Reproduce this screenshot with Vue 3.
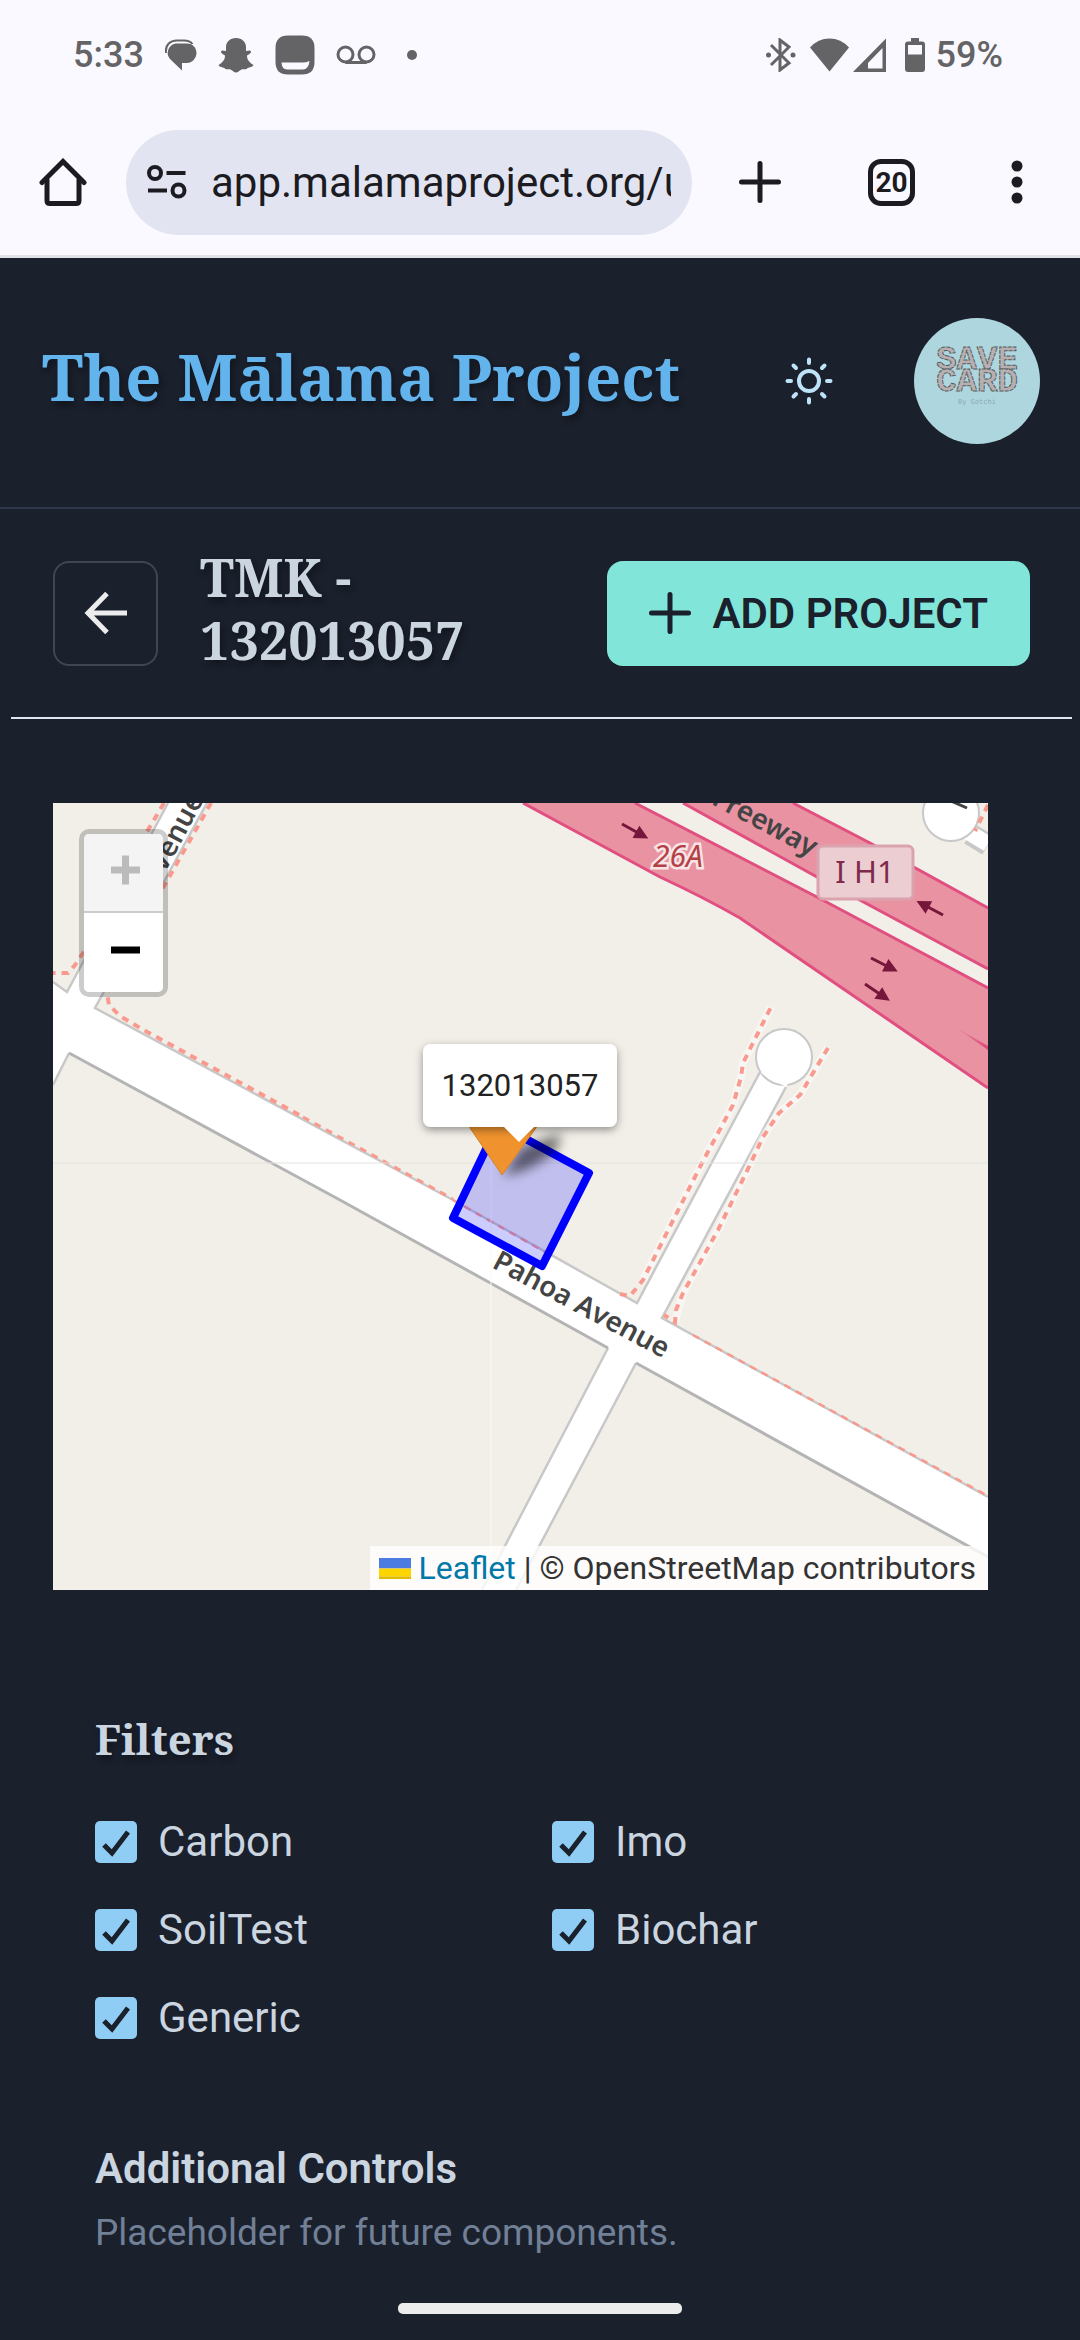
<script setup>
import { ref } from 'vue'

const address = ref('app.malamaproject.org/user')
const parcel = '132013057'
const filters = ref([
  { id: 'carbon', label: 'Carbon', on: true },
  { id: 'imo', label: 'Imo', on: true },
  { id: 'soiltest', label: 'SoilTest', on: true },
  { id: 'biochar', label: 'Biochar', on: true },
  { id: 'generic', label: 'Generic', on: true },
])
</script>

<template>
  <div class="screen">
    <div class="status">
      <div class="status-left">
        <span class="clock">5:33</span>
        <svg width="32" height="32" viewBox="0 0 32 32">
          <path d="M1 14C0 6 5 1.500 12 1.500H19C23 1.500 26 3 27.500 5" fill="none" stroke="#646466" stroke-width="2" />
          <path d="M12 4.500H22C28 4.500 31.500 9 31.500 14S27 24 22 24H17V31.500L6 21C3 18 2 15 3 12C4 7 8 4.500 12 4.500Z" fill="#646466" />
        </svg>
        <svg width="36" height="36" viewBox="0 0 36 36">
          <path d="M18 1C24 1 28 5 28 10V14L32 13.500C34 14.500 33 16.500 29 18.500C29 23 31 25 35.500 28C34 30.500 32 30 29.500 31C28 33.500 26 31.500 23.500 32.500C21 34 20 35.500 18 35.500S15 34 12.500 32.500C10 31.500 8 33.500 6.500 31C4 30 2 30.500 .5 28C5 25 7 23 7 18.500C3 16.500 2 14.500 4 13.500L8 14V10C8 5 12 1 18 1Z" fill="#646466" />
        </svg>
        <svg width="40" height="40" viewBox="0 0 40 40">
          <path fill-rule="evenodd" d="M13 .5H27Q39.500 .5 39.500 13V27Q39.500 39.500 27 39.500H13Q.5 39.500 .5 27V13Q.5 .5 13 .5ZM6.500 27.500Q7 34.500 12 34.500H28Q33.500 34.500 34.500 26Q31 27.500 28 27.500Z" fill="#646466" />
        </svg>
        <svg width="40" height="20" viewBox="0 0 40 20" fill="none" stroke="#646466" stroke-width="3">
          <circle cx="9.500" cy="9.500" r="7.500" /><circle cx="30.500" cy="9.500" r="7.500" /><path d="M9.500 17.500H30.500" />
        </svg>
        <span class="dot"></span>
      </div>
      <div class="status-right">
        <svg width="30" height="34" viewBox="0 0 30 34">
          <path d="M5 7L23 25L14 32V2L23 9L5 27" fill="none" stroke="#646466" stroke-width="3" />
          <circle cx="2.500" cy="17" r="2.500" fill="#646466" /><circle cx="27" cy="17" r="2.500" fill="#646466" />
        </svg>
        <svg class="wifi" width="76" height="34" viewBox="0 0 76 34">
          <path d="M0 9.500Q8 .5 19.500 .5T39 9.500L19.500 33.500Z" fill="#646466" />
          <path fill-rule="evenodd" d="M76 .5V34H43ZM72.500 10L58 25V30.500H72.500Z" fill="#646466" />
        </svg>
        <svg class="battery" width="22" height="34" viewBox="0 0 22 34">
          <path fill-rule="evenodd" d="M7 0H15V3.500H18Q21 3.500 21 6.500V31Q21 34 18 34H4Q1 34 1 31V6.500Q1 3.500 4 3.500H7ZM4 7V16.500H18V7Z" fill="#646466" />
        </svg>
        <span class="clock">59%</span>
      </div>
    </div>

    <div class="toolbar">
      <button class="bare" aria-label="Home">
        <svg width="48" height="48" viewBox="0 0 48 48" fill="none" stroke="#1b1b21" stroke-width="5">
          <path d="M8 21V42.500Q8 45.500 11 45.500H37Q40 45.500 40 42.500V21" />
          <path d="M3 24.500L24 3.500L45 24.500" stroke-linecap="round" />
        </svg>
      </button>
      <div class="pill">
        <svg width="40" height="34" viewBox="0 0 40 34" fill="none" stroke="#1b1b21" stroke-width="4">
          <circle cx="8" cy="8" r="6" /><circle cx="31.500" cy="25.500" r="6" /><path d="M19.500 8H38.500M1 25.500H20" />
        </svg>
        <input v-model="address" class="url" type="text" aria-label="Address" />
      </div>
      <button class="bare" aria-label="New tab">
        <svg width="42" height="42" viewBox="0 0 42 42" fill="none" stroke="#1b1b21" stroke-width="5" stroke-linecap="round">
          <path d="M21 2.500V39.500M2.500 21H39.500" />
        </svg>
      </button>
      <button class="tabs" aria-label="Open tabs">20</button>
      <button class="bare" aria-label="Menu">
        <svg width="12" height="44" viewBox="0 0 12 44" fill="#1b1b21">
          <circle cx="6" cy="6" r="5.500" /><circle cx="6" cy="22" r="5.500" /><circle cx="6" cy="38" r="5.500" />
        </svg>
      </button>
    </div>

    <header class="site">
      <h1>The Mālama Project</h1>
      <button class="bare" aria-label="Toggle theme">
        <svg width="48" height="48" viewBox="0 0 48 48" fill="none" stroke="#bee3f8" stroke-width="4" stroke-linecap="round">
          <circle cx="24" cy="24" r="10" />
          <path d="M24 2.500V6M24 42V45.500M2.500 24H6M42 24H45.500M8.500 8.500L11 11M37 37L39.500 39.500M8.500 39.500L11 37M37 11L39.500 8.500" />
        </svg>
      </button>
      <button class="bare avatar" aria-label="Account">
        <svg width="126" height="126" viewBox="0 0 126 126">
          <circle cx="63" cy="63" r="63" fill="#aed6df" />
          <g class="pixel" text-anchor="middle">
            <text x="63" y="51">SAVE</text>
            <text x="63" y="73">CARD</text>
          </g>
          <text class="by" x="63" y="86" text-anchor="middle">By Gotchi</text>
        </svg>
      </button>
    </header>

    <main>
      <div class="titlebar">
        <button class="back" aria-label="Back">
          <svg width="44" height="44" viewBox="0 0 44 44" fill="none" stroke="#ececec" stroke-width="5">
            <path d="M43 22H5M23 2.500L4 22L23 41.500" />
          </svg>
        </button>
        <h2>TMK - {{ parcel }}</h2>
        <button class="add">
          <svg width="42" height="42" viewBox="0 0 42 42" fill="none" stroke="#1a202c" stroke-width="5" stroke-linecap="round">
            <path d="M21 2.500V39.500M2.500 21H39.500" />
          </svg>
          ADD PROJECT
        </button>
      </div>

      <section class="map" aria-label="Parcel map">
        <svg class="canvas" viewBox="0 0 935 787">
          <defs>
            <filter id="soft" x="-50%" y="-50%" width="200%" height="200%"><feGaussianBlur stdDeviation="6" /></filter>
            <filter id="drop" x="-10%" y="-20%" width="120%" height="150%"><feDropShadow dx="0" dy="3" stdDeviation="4" flood-opacity="0.4" /></filter>
            <linearGradient id="lane" x1="0" x2="1"><stop offset="0" stop-color="#dc4878" stop-opacity="0" /><stop offset="1" stop-color="#dc4878" /></linearGradient>
            <path id="arrow" d="M0 -1.500H16V-7L30 0L16 7V1.500H0Z" />
          </defs>
          <rect width="935" height="787" fill="#f2efe9" />

          <!-- local streets -->
          <path d="M115 0L14 189L0 179V282L16 250L287 397L555 545L429 787H463L583 560L935 754V694L609 515L733 284L707 269L584 500L400 397L42 205L154 0Z" fill="#fff" />
          <circle cx="731" cy="254" r="28" fill="#fff" stroke="#c8c8c8" stroke-width="2" />
          <path d="M708 270L720 250L745 264L733 284Z" fill="#fff" />
          <g fill="none" stroke="#c8c8c8" stroke-width="2.500">
            <path d="M115 0L14 189L0 179M154 0L42 205L400 397L584 500L707 269M733 284L609 515L935 694" />
            <path d="M0 282L16 250M555 545L429 787M463 787L583 560" />
            <path d="M16 250L287 397L555 545M583 560L935 754" stroke="#b4b4b4" stroke-width="3" />
          </g>
          <path d="M917 31L935 42" stroke="#c8c8c8" stroke-width="22" />
          <path d="M915 29L935 41" stroke="#fff" stroke-width="16" />
          <circle cx="898" cy="10" r="28" fill="#fff" stroke="#c8c8c8" stroke-width="2" />
          <path d="M898 -2L914 5" stroke="#444" stroke-width="3" />

          <!-- footpaths -->
          <g fill="none" stroke="#fff" stroke-opacity="0.45" stroke-width="8">
            <path d="M590 477L649 360L680 302L688 274L690 260L705 230L718 204M775 245L760 270L747 292L726 310L710 334L693 370L665 427L630 490L622 519" />
          </g>
          <g fill="none" stroke="#fa9a8e" stroke-width="4" stroke-dasharray="7 6">
            <path d="M111 0L92 32L30 150L22 162L15 170H0" />
            <path d="M158 0L110 85L54 190L56 202L67 213L87 225L250 314" />
            <path d="M567 491L577 493L590 477L649 360L680 302L688 274L690 260L705 230L718 204" />
            <path d="M775 245L760 270L747 292L726 310L710 334L693 370L665 427L630 490L623 507L622 519L611 512" />
            <path d="M250 314L400 396" stroke-width="3" />
            <path d="M400 397L492 449M640 532L935 693" stroke-width="2.500" />
            <path d="M935 2L922 28" />
          </g>

          <!-- freeway -->
          <g fill="#e892a2">
            <path d="M470 0L607 74Q650 94 687 115L935 285V185L764 94L582 0Z" />
            <path d="M630 0L764 74L935 166V105L817 40L740 0Z" />
          </g>
          <g fill="none" stroke="#e14f81" stroke-width="3">
            <path d="M470 0L607 74Q650 94 687 115L935 285M582 0L764 94L935 185M630 0L764 74L935 166M740 0L817 40L935 105" />
          </g>
          <path d="M902 224L935 243V247Z" fill="url(#lane)" />
          <g fill="#76163a">
            <use href="#arrow" transform="translate(569 21) rotate(29)" />
            <use href="#arrow" transform="translate(890 112) rotate(208)" />
            <use href="#arrow" transform="translate(818 155) rotate(27)" />
            <use href="#arrow" transform="translate(812 181) rotate(34)" />
          </g>
          <text class="road" x="758" y="54" text-anchor="end" transform="rotate(28 758 54)">Freeway</text>
          <text class="exit" x="600" y="64">26A</text>
          <rect x="765" y="43" width="95" height="53" rx="5" fill="#eccdd2" stroke="#dba3ae" stroke-width="3" />
          <text class="shield" x="812" y="80" text-anchor="middle">I H1</text>

          <text class="road" x="112" y="70" transform="rotate(-62 112 70)">venue</text>
          <text class="road" x="438" y="464" transform="rotate(28 438 464)">Pahoa Avenue</text>
          <path d="M0 360H935" stroke="#e4e2df" />
          <path d="M438 340V787" stroke="#fbfaf8" stroke-width="1" />

          <!-- selected parcel -->
          <path d="M400 415L489 463L536 370L445 321Z" fill="#00f" fill-opacity="0.2" stroke="#00f" stroke-width="8" stroke-linejoin="round" />
          <path d="M450 373L468 345L508 330L504 346Q480 368 450 373Z" fill="#000" fill-opacity="0.55" filter="url(#soft)" />
          <path d="M449 372L417 325Q408 300 430 285H470Q492 300 483 325Z" fill="#f0932e" stroke="#d5832c" stroke-width="1" />
          <g filter="url(#drop)">
            <rect x="370" y="241" width="194" height="83" rx="8" fill="#fff" />
          </g>
          <path d="M451 324H481L466 339Z" fill="#fff" />
          <text class="tip" x="467" y="293" text-anchor="middle">{{ parcel }}</text>
        </svg>

        <div class="zoom">
          <button aria-label="Zoom in" disabled>
            <svg width="30" height="30" viewBox="0 0 30 30"><path d="M0 15H29M14.500 .5V29.500" stroke="#bbb" stroke-width="7" /></svg>
          </button>
          <button aria-label="Zoom out">
            <svg width="30" height="30" viewBox="0 0 30 30"><path d="M0 15H29" stroke="#000" stroke-width="7" /></svg>
          </button>
        </div>

        <div class="credit">
          <a href="#leaflet"><svg width="32" height="21" viewBox="0 0 12 8" preserveAspectRatio="none"><path fill="#4c7be1" d="M0 0h12v4H0z" /><path fill="#ffd500" d="M0 4h12v3H0z" /><path fill="#e0bc00" d="M0 7h12v1H0z" /></svg> Leaflet</a>
          | © OpenStreetMap contributors
        </div>
      </section>

      <section class="panel">
        <h3>Filters</h3>
        <div class="filters">
          <label v-for="f in filters" :key="f.id" :for="f.id">
            <input :id="f.id" v-model="f.on" type="checkbox" />
            <svg class="tick" width="42" height="42" viewBox="0 0 42 42"><path d="M9 24L17 32L33 11" fill="none" stroke="#1a202c" stroke-width="5" /></svg>
            {{ f.label }}
          </label>
        </div>
        <h4>Additional Controls</h4>
        <p>Placeholder for future components.</p>
      </section>
    </main>

    <div class="gesture"></div>
  </div>
</template>

<style>
body {
  background: #1a202c;
}
</style>

<style scoped>
.screen {
  padding-bottom: 26px;
  background: #1a202c;
  color: #cbd5e0;
  font-family: Roboto, "Liberation Sans", sans-serif;
  font-size: 42px;
}
button {
  display: flex;
  align-items: center;
  justify-content: center;
  flex: none;
  margin: 0;
  padding: 0;
  border: 0;
  background: none;
  font: inherit;
  color: inherit;
}
svg {
  display: block;
  flex: none;
}
.status {
  display: flex;
  justify-content: space-between;
  align-items: center;
  height: 109px;
  padding: 0 77px 0 73px;
  background: #faf9ff;
}
.status-left,
.status-right {
  display: flex;
  align-items: center;
}
.status-left {
  gap: 21px;
}
.clock {
  font-size: 36px;
  font-weight: 500;
  line-height: 42px;
  color: #646466;
}
.dot {
  width: 10px;
  height: 10px;
  margin-left: 10px;
  border-radius: 50%;
  background: #646466;
}
.wifi {
  margin: 0 18px 0 14px;
}
.battery {
  margin-right: 10px;
}
.toolbar {
  display: flex;
  align-items: center;
  height: 146px;
  padding: 0 57px 0 39px;
  border-bottom: 3px solid #e1e3ea;
  background: #faf9ff;
}
.pill {
  display: flex;
  align-items: center;
  flex: 1;
  gap: 24px;
  height: 105px;
  min-width: 0;
  margin: 0 47px 0 39px;
  padding: 0 21px;
  box-sizing: border-box;
  border-radius: 53px;
  background: #e2e5f1;
}
.url {
  flex: 1;
  min-width: 0;
  height: 60px;
  padding: 0;
  border: 0;
  outline: 0;
  background: none;
  font: 42px Roboto, "Liberation Sans", sans-serif;
  color: #1b1b21;
}
.tabs {
  width: 47px;
  height: 47px;
  margin: 0 96px 0 87px;
  border: 5px solid #1b1b21;
  border-radius: 13px;
  font-size: 28px;
  font-weight: 700;
  color: #1b1b21;
}
.site {
  display: flex;
  align-items: center;
  padding: 60px 40px 63px 42px;
  border-bottom: 2px solid #2d3748;
}
h1,
h2,
h3 {
  margin: 0;
  font-family: "Noto Serif", "DejaVu Serif", serif;
  font-weight: 700;
  line-height: 63px;
  text-shadow: 2px 4px 6px rgba(0, 0, 0, 0.4);
}
h1,
h2 {
  flex: 1;
  padding-bottom: 10px;
}
h1 {
  font-size: 63px;
  white-space: nowrap;
  color: #63b3ed;
}
.avatar {
  margin-left: 81px;
}
.pixel {
  font: 700 34px "Liberation Mono", monospace;
  fill: #b8b0b0;
  stroke: #555d60;
  stroke-width: 1px;
  stroke-dasharray: 4 1;
}
.by {
  font: 7px "DejaVu Sans Mono", monospace;
  fill: #8fa9af;
}
.titlebar {
  display: flex;
  align-items: center;
  gap: 42px;
  margin: 0 8px 0 11px;
  padding: 36px 42px;
  border-bottom: 2px solid #e2e4f2;
}
.back {
  width: 105px;
  height: 105px;
  border: 2px solid #41454f;
  border-radius: 16px;
}
h2 {
  font-size: 52px;
}
.add {
  gap: 21px;
  height: 105px;
  padding: 0 42px;
  border-radius: 16px;
  background: #81e6d9;
  font-weight: 600;
  color: #1a202c;
}
.map {
  position: relative;
  margin: 84px 92px 0 53px;
}
.canvas {
  width: 100%;
  height: auto;
}
.road {
  font: 600 28px "Noto Sans", sans-serif;
  fill: #444;
}
.exit {
  font: italic 30px "Noto Sans", sans-serif;
  fill: #b34044;
  stroke: #f8e4e6;
  stroke-width: 5px;
  paint-order: stroke;
}
.shield {
  font: 31px "Noto Sans", sans-serif;
  fill: #7d2a4c;
}
.tip {
  font: 31px Roboto, sans-serif;
  fill: #222;
}
.zoom {
  position: absolute;
  top: 26px;
  left: 26px;
  border: 5px solid rgba(0, 0, 0, 0.2);
  border-radius: 10px;
  background-clip: padding-box;
}
.zoom button {
  width: 79px;
  height: 79px;
  padding: 0 0 6px 4px;
  background: #fff;
  border-radius: 0 0 5px 5px;
}
.zoom button:first-child {
  border-bottom: 2px solid #ccc;
  border-radius: 5px 5px 0 0;
  background: #f4f4f4;
}
.credit {
  position: absolute;
  right: 0;
  bottom: 0;
  padding: 0 12px 0 9px;
  background: rgba(255, 255, 255, 0.8);
  font-size: 32px;
  line-height: 44px;
  white-space: nowrap;
  color: #333;
}
.credit a {
  color: #0078a8;
  text-decoration: none;
}
.credit svg {
  display: inline;
}
.panel {
  padding: 117px 95px 0;
}
h3 {
  font-size: 42px;
}
.filters {
  display: grid;
  grid-template-columns: 1fr 1fr;
  gap: 38px 24px;
  margin-top: 47px;
}
.filters label {
  position: relative;
  display: flex;
  align-items: center;
  gap: 21px;
  line-height: 50px;
}
.filters input {
  appearance: none;
  width: 42px;
  height: 42px;
  margin: 0;
  border-radius: 5px;
  background: #90cdf4;
}
.filters .tick {
  position: absolute;
  left: 0;
  pointer-events: none;
}
.filters input:not(:checked) + .tick {
  display: none;
}
h4 {
  margin: 101px 0 0;
  font-size: 42px;
  font-weight: 600;
  line-height: 50px;
}
p {
  margin: 11px 0 0;
  font-size: 37px;
  line-height: 55px;
  color: #718096;
}
.gesture {
  width: 284px;
  height: 11px;
  margin: 43px auto 0;
  border-radius: 5px;
  background: #ececec;
}
</style>
